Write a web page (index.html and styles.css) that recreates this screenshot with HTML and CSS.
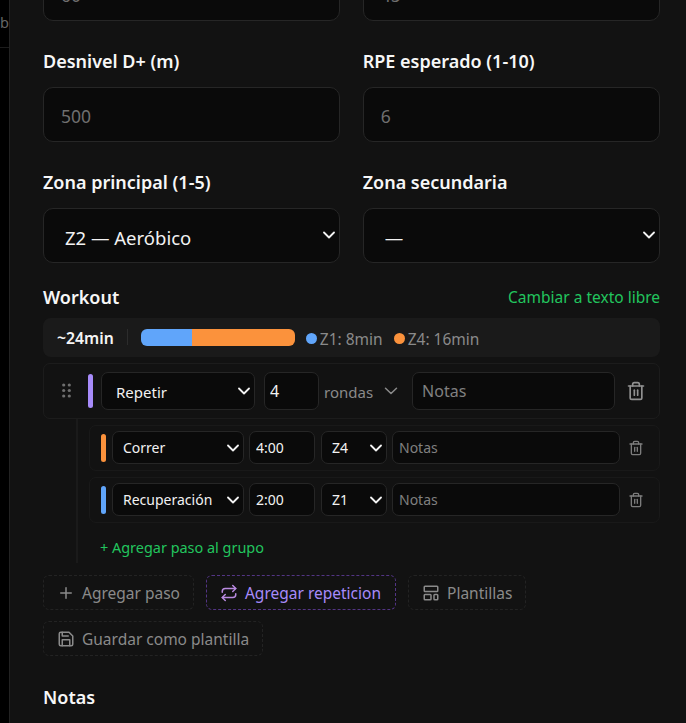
FILE: index.html
```html
<!DOCTYPE html>
<html lang="es">
<head>
    <meta charset="UTF-8">
    <meta name="viewport" content="width=device-width, initial-scale=1.0">
    <title>Editar entrenamiento</title>
    <link rel="stylesheet" href="styles.css">
</head>
<body>

<div class="page">
    <div class="backdrop">
        <div class="backdrop-head"><span>Job</span></div>
    </div>

    <div class="panel">
        <form class="form">
            <div class="field-grid">
                <div class="field">
                    <input class="input" type="text" placeholder="60">
                </div>
                <div class="field">
                    <input class="input" type="text" placeholder="45">
                </div>
                <div class="field">
                    <label class="label">Desnivel D+ (m)</label>
                    <input class="input" type="text" placeholder="500">
                </div>
                <div class="field">
                    <label class="label">RPE esperado (1-10)</label>
                    <input class="input" type="text" placeholder="6">
                </div>
                <div class="field">
                    <label class="label">Zona principal (1-5)</label>
                    <select class="input select-big">
                        <option>Z2 — Aeróbico</option>
                    </select>
                </div>
                <div class="field">
                    <label class="label">Zona secundaria</label>
                    <select class="input select-big">
                        <option>—</option>
                    </select>
                </div>
            </div>

            <div class="workout-head">
                <span class="label">Workout</span>
                <a class="link-green">Cambiar a texto libre</a>
            </div>

            <div class="summary">
                <strong class="summary-time">~24min</strong>
                <span class="summary-sep"></span>
                <div class="zone-bar">
                    <span class="zone-bar-z1"></span>
                    <span class="zone-bar-z4"></span>
                </div>
                <div class="zone-legend">
                    <span class="zone-item"><i class="dot dot-blue"></i>Z1: 8min</span>
                    <span class="zone-item"><i class="dot dot-orange"></i>Z4: 16min</span>
                </div>
            </div>

            <div class="step-row group-row">
                <svg class="grip" viewBox="0 0 9 15" width="9" height="15"><g fill="#6f6f6f"><circle cx="1.7" cy="2" r="1.6"/><circle cx="7.3" cy="2" r="1.6"/><circle cx="1.7" cy="7.5" r="1.6"/><circle cx="7.3" cy="7.5" r="1.6"/><circle cx="1.7" cy="13" r="1.6"/><circle cx="7.3" cy="13" r="1.6"/></g></svg>
                <span class="color-bar bar-purple"></span>
                <select class="mini mini-type"><option>Repetir</option></select>
                <input class="mini mini-count" type="text" value="4">
                <span class="rounds">rondas</span>
                <svg class="rounds-chevron" viewBox="0 0 14 8" width="14" height="8" fill="none" stroke="#8a8a8a" stroke-width="1.5" stroke-linecap="round" stroke-linejoin="round"><path d="M1.5 1.2 7 6.5l5.5-5.3"/></svg>
                <input class="mini mini-notes" type="text" placeholder="Notas">
                <svg class="trash" viewBox="0 0 24 24" width="20" height="20" fill="none" stroke="#909090" stroke-width="2" stroke-linecap="round" stroke-linejoin="round"><path d="M3 6h18"/><path d="M19 6v14a2 2 0 0 1-2 2H7a2 2 0 0 1-2-2V6"/><path d="M8 6V4a2 2 0 0 1 2-2h4a2 2 0 0 1 2 2v2"/><path d="M10 11v6"/><path d="M14 11v6"/></svg>
            </div>

            <div class="group-body">
                <div class="step-row sub-row">
                    <span class="color-bar bar-orange"></span>
                    <select class="mini sub-type"><option>Correr</option></select>
                    <input class="mini sub-time" type="text" value="4:00">
                    <select class="mini sub-zone"><option>Z4</option></select>
                    <input class="mini sub-notes" type="text" placeholder="Notas">
                    <svg class="trash-small" viewBox="0 0 24 24" width="16" height="16" fill="none" stroke="#7c7c7c" stroke-width="2" stroke-linecap="round" stroke-linejoin="round"><path d="M3 6h18"/><path d="M19 6v14a2 2 0 0 1-2 2H7a2 2 0 0 1-2-2V6"/><path d="M8 6V4a2 2 0 0 1 2-2h4a2 2 0 0 1 2 2v2"/><path d="M10 11v6"/><path d="M14 11v6"/></svg>
                </div>
                <div class="step-row sub-row">
                    <span class="color-bar bar-blue"></span>
                    <select class="mini sub-type"><option>Recuperación</option></select>
                    <input class="mini sub-time" type="text" value="2:00">
                    <select class="mini sub-zone"><option>Z1</option></select>
                    <input class="mini sub-notes" type="text" placeholder="Notas">
                    <svg class="trash-small" viewBox="0 0 24 24" width="16" height="16" fill="none" stroke="#7c7c7c" stroke-width="2" stroke-linecap="round" stroke-linejoin="round"><path d="M3 6h18"/><path d="M19 6v14a2 2 0 0 1-2 2H7a2 2 0 0 1-2-2V6"/><path d="M8 6V4a2 2 0 0 1 2-2h4a2 2 0 0 1 2 2v2"/><path d="M10 11v6"/><path d="M14 11v6"/></svg>
                </div>
                <a class="add-to-group">+ Agregar paso al grupo</a>
            </div>

            <div class="actions">
                <button class="btn" type="button">
                    <svg viewBox="0 0 24 24" width="18" height="18" fill="none" stroke="currentColor" stroke-width="2" stroke-linecap="round" stroke-linejoin="round"><path d="M5 12h14"/><path d="M12 5v14"/></svg>
                    Agregar paso
                </button>
                <button class="btn btn-purple" type="button">
                    <svg viewBox="0 0 24 24" width="18" height="18" fill="none" stroke="currentColor" stroke-width="2" stroke-linecap="round" stroke-linejoin="round"><path d="m17 2 4 4-4 4"/><path d="M3 11v-1a4 4 0 0 1 4-4h14"/><path d="m7 22-4-4 4-4"/><path d="M21 13v1a4 4 0 0 1-4 4H3"/></svg>
                    Agregar repeticion
                </button>
                <button class="btn" type="button">
                    <svg viewBox="0 0 24 24" width="18" height="18" fill="none" stroke="currentColor" stroke-width="2" stroke-linecap="round" stroke-linejoin="round"><rect x="3" y="3" width="18" height="7" rx="1"/><rect x="3" y="14" width="9" height="7" rx="1"/><rect x="16" y="14" width="5" height="7" rx="1"/></svg>
                    Plantillas
                </button>
                <button class="btn" type="button">
                    <svg viewBox="0 0 24 24" width="18" height="18" fill="none" stroke="currentColor" stroke-width="2" stroke-linecap="round" stroke-linejoin="round"><path d="M19 21H5a2 2 0 0 1-2-2V5a2 2 0 0 1 2-2h11l5 5v11a2 2 0 0 1-2 2z"/><path d="M17 21v-8H7v8"/><path d="M7 3v5h8"/></svg>
                    Guardar como plantilla
                </button>
            </div>

            <div class="notes-field">
                <label class="label">Notas</label>
                <textarea class="input notes-area"></textarea>
            </div>
        </form>
    </div>
</div>

</body>
</html>
```

FILE: styles.css
```css
* {
    box-sizing: border-box;
}
html, body {
    height: 100%;
}
body {
    margin: 0;
    overflow: hidden;
    background-color: #000;
    font-family: "Noto Sans", "Open Sans", sans-serif;
    font-size: 15px;
    color: #f2f2f2;
}
.page {
    display: flex;
    height: 723px;
    overflow: hidden;
}
.backdrop {
    width: 10px;
    flex: none;
    overflow: hidden;
    background-color: #000;
    border-right: 1px solid #222;
}
.backdrop-head {
    display: flex;
    justify-content: flex-end;
    align-items: center;
    height: 48px;
    padding-bottom: 3px;
    border-bottom: 1px solid #1c1c1c;
    color: #666;
    font-size: 14.5px;
}
.panel {
    flex: 1;
    overflow: hidden;
    background-color: #121212;
    padding: 0 26px 0 33px;
}
.form {
    margin-top: -34px;
}
.field-grid {
    display: grid;
    grid-template-columns: 1fr 1fr;
    column-gap: 22.4px;
    row-gap: 27.6px;
}
.field {
    display: flex;
    flex-direction: column;
}
.label {
    display: block;
    font-size: 18px;
    line-height: 26px;
    font-weight: 600;
    color: #f7f7f7;
    margin-bottom: 13px;
}
.input {
    width: 100%;
    height: 54.5px;
    padding: 4px 17px 0;
    background-color: #0a0a0a;
    border: 1px solid #262626;
    border-radius: 10px;
    color: #f2f2f2;
    font-family: inherit;
    font-size: 17.5px;
    outline: none;
}
.input::placeholder {
    color: #6f6f6f;
    opacity: 1;
}
.mini::placeholder {
    color: #808080;
    opacity: 1;
}
select {
    appearance: none;
    background-repeat: no-repeat;
    background-image: url("data:image/svg+xml,%3Csvg xmlns='http://www.w3.org/2000/svg' viewBox='0 0 12 8'%3E%3Cpath d='M1 1.5 6 6.5l5-5' fill='none' stroke='%23f2f2f2' stroke-width='1.8' stroke-linecap='round' stroke-linejoin='round'/%3E%3C/svg%3E");
    background-size: 12px 8px;
}
.select-big {
    padding-left: 21px;
    font-size: 18.5px;
    background-position: right 4px center;
}
.workout-head {
    display: flex;
    justify-content: space-between;
    align-items: center;
    margin-top: 21px;
    height: 26px;
}
.workout-head .label {
    margin: 0;
}
.link-green {
    color: #22c55e;
    font-size: 15.5px;
}
.summary {
    display: flex;
    align-items: center;
    height: 39px;
    margin-top: 8px;
    padding: 0 14px;
    background-color: #1a1a1a;
    border-radius: 8px;
}
.summary-time {
    padding-top: 2px;
    font-size: 15.8px;
    font-weight: 600;
    color: #f5f5f5;
}
.summary-sep {
    width: 1px;
    height: 16px;
    margin: 0 13px;
    background-color: #2c2c2c;
}
.zone-bar {
    display: flex;
    width: 154px;
    height: 17px;
    border-radius: 6px;
    overflow: hidden;
}
.zone-bar-z1 {
    width: 33.3%;
    background-color: #60a5fa;
}
.zone-bar-z4 {
    flex: 1;
    background-color: #fb923c;
}
.zone-legend {
    display: flex;
    gap: 11px;
    margin-left: 11px;
    padding-top: 3px;
    color: #8a8a8a;
    font-size: 15.5px;
}
.zone-item {
    display: flex;
    align-items: center;
    gap: 3px;
}
.dot {
    width: 11px;
    height: 11px;
    border-radius: 50%;
}
.dot-blue {
    background-color: #60a5fa;
}
.dot-orange {
    background-color: #fb923c;
}
.step-row {
    display: flex;
    align-items: center;
    border: 1px solid #1c1c1c;
    border-radius: 7px;
}
.group-row {
    height: 56px;
    margin-top: 6px;
    padding-left: 18px;
}
.color-bar {
    flex: none;
    width: 5px;
    border-radius: 3px;
}
.bar-purple {
    height: 34px;
    margin-left: 17px;
    background-color: #a78bfa;
}
.bar-orange {
    background-color: #fb923c;
}
.bar-blue {
    background-color: #60a5fa;
}
.mini {
    height: 38px;
    padding-top: 2px;
    background-color: #0a0a0a;
    border: 1px solid #262626;
    border-radius: 7px;
    color: #f2f2f2;
    font-family: inherit;
    font-size: 15px;
    outline: none;
}
.mini-type {
    width: 154px;
    margin-left: 8px;
    padding-left: 14px;
    background-position: right 4px center;
}
.mini-count {
    width: 55px;
    margin-left: 9px;
    padding-left: 5px;
    font-size: 16px;
}
.rounds {
    margin-left: 5px;
    padding-top: 2px;
    color: #8a8a8a;
    font-size: 15px;
}
.rounds-chevron {
    margin-left: 11px;
}
.mini-notes {
    width: 203px;
    margin-left: 14px;
    padding-left: 9px;
    font-size: 16px;
}
.trash {
    margin-left: 11px;
}
.group-body {
    margin-left: 33px;
    padding: 6px 0 5px 11px;
    border-left: 2px solid #1a1a1a;
}
.sub-row {
    height: 46px;
    margin-bottom: 6px;
    border-color: #191919;
}
.sub-row .color-bar {
    height: 28px;
    margin-left: 11px;
}
.sub-row .mini {
    height: 33px;
    padding-top: 0;
    font-size: 14px;
}
.sub-type {
    width: 132px;
    margin-left: 6px;
    padding-left: 10px;
    background-position: right 4px center;
}
.sub-time {
    width: 66px;
    margin-left: 5px;
    padding-left: 6px;
}
.sub-zone {
    width: 66px;
    margin-left: 6px;
    padding-left: 10px;
    background-position: right 4px center;
}
.sub-notes {
    width: 228px;
    margin-left: 5px;
    padding-left: 6px;
}
.trash-small {
    margin-left: 8px;
}
.add-to-group {
    display: block;
    margin: 15px 0 0 11px;
    color: #22c55e;
    font-size: 14.45px;
    line-height: 20px;
}
.actions {
    display: flex;
    flex-wrap: wrap;
    gap: 11px 12px;
    margin-top: 12px;
}
.btn {
    display: flex;
    align-items: center;
    gap: 7px;
    height: 35px;
    padding: 1px 13px 0;
    background: none;
    border: 1px dashed #232323;
    border-radius: 6px;
    color: #8a8a8a;
    font-family: inherit;
    font-size: 15.5px;
}
.btn-purple {
    padding-right: 14px;
    color: #a78bfa;
    border-color: #533585;
}
.btn-purple svg {
    color: #b98ae0;
}
.notes-field {
    margin-top: 28px;
}
.notes-area {
    height: 80px;
    display: block;
    resize: none;
}
```
